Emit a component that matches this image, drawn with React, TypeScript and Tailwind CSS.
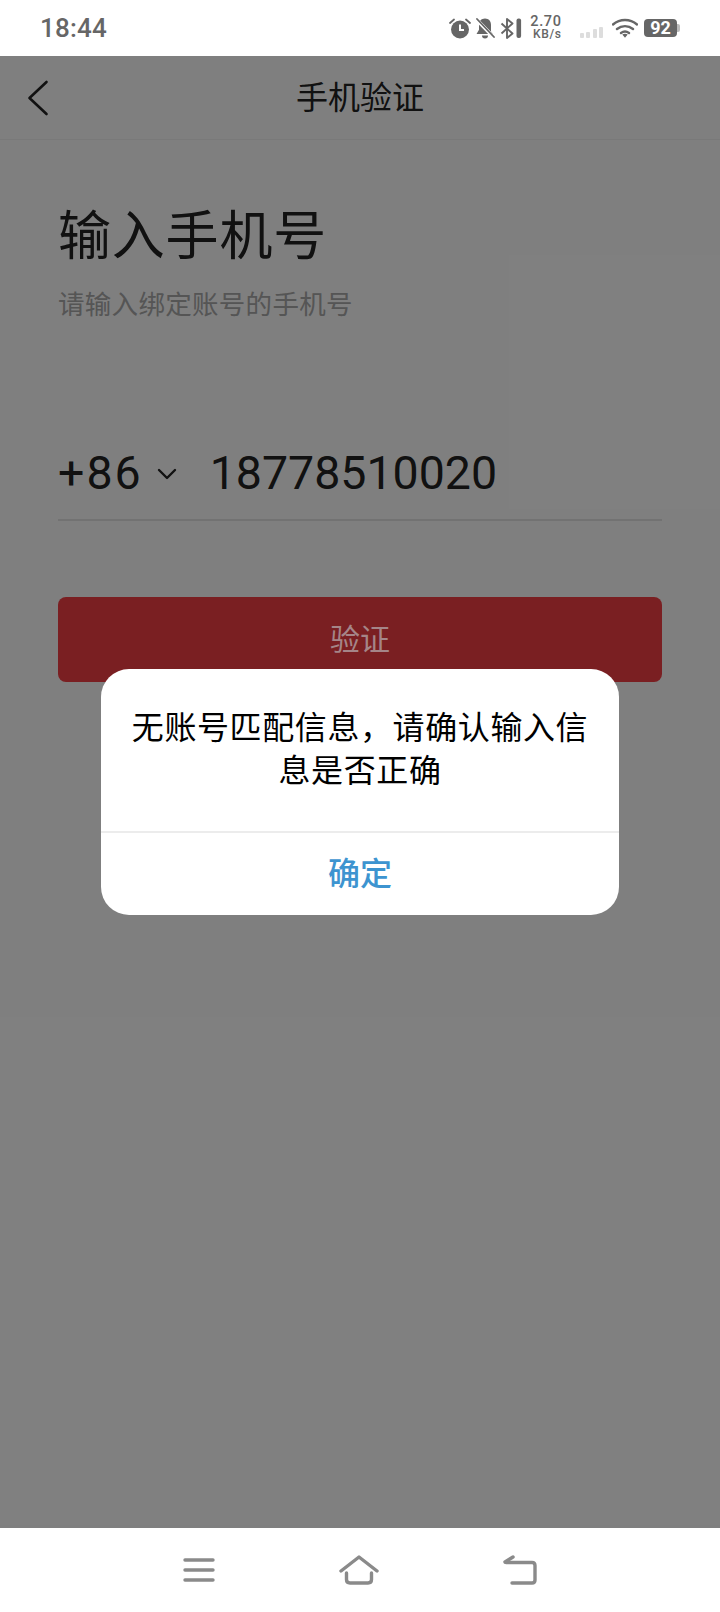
import React from 'react';

const cjk = "font-['Roboto','Noto_Sans_CJK_SC',sans-serif]";

const StatusIcons: React.FC = () => (
  <div className="flex items-center text-[#666]">
    {/* alarm */}
    <svg width="22" height="21" viewBox="0 0 22 21" className="mr-[4px]">
      <circle cx="11" cy="11.5" r="9" fill="#666" />
      <path d="M11 6.500v5.500h4" fill="none" stroke="#fff" strokeWidth="2" />
      <path d="M1 5l4-3.500M21 5l-4-3.500" stroke="#666" strokeWidth="1.800" strokeLinecap="round" />
    </svg>
    {/* muted bell */}
    <svg width="20" height="21" viewBox="0 0 20 21" className="mr-[5px]">
      <path d="M10 .5c-3.800 0-6 2.800-6 6.200v5L1.500 16h16.500L16 13.500V6.700c0-3.400-2.200-6.200-6-6.200z" fill="#666" />
      <path d="M7 17.500a3 3 0 0 0 6 0z" fill="#666" />
      <path d="M1.500 1.500l17 17.500" stroke="#fff" strokeWidth="3.600" />
      <path d="M2 1l17 18" stroke="#666" strokeWidth="1.800" strokeLinecap="round" />
    </svg>
    {/* bluetooth with battery bar */}
    <svg width="22" height="21" viewBox="0 0 22 21" className="mr-[8px]">
      <path d="M1.500 5.500l11 10-5.500 4.500V1l5.500 4.500-11 10" fill="none" stroke="#666" strokeWidth="1.900" strokeLinejoin="round" />
      <rect x="16.500" y="0.500" width="4.600" height="19.500" rx="2" fill="#666" />
    </svg>
    <div className="flex flex-col items-end w-[32px] mr-[18px] font-['Roboto',sans-serif] font-medium">
      <span className="text-[14.500px] leading-[12px] tracking-[0.6px]">2.70</span>
      <span className="text-[12px] leading-[11px] tracking-[0.6px] mt-[1px]">KB/s</span>
    </div>
    {/* weak signal */}
    <div className="flex items-end gap-[2.500px] h-[12px] mr-[9px] mt-[8px]">
      <div className="w-[4px] h-[5px] rounded-[1px] bg-[#ddd]" />
      <div className="w-[4px] h-[6px] rounded-[1px] bg-[#ddd]" />
      <div className="w-[4px] h-[9px] rounded-[1px] bg-[#ddd]" />
      <div className="w-[4px] h-[11px] rounded-[1px] bg-[#ddd]" />
    </div>
    {/* wifi */}
    <svg width="26" height="20" viewBox="0 0 26 20" className="mr-[6px]">
      <path d="M1 6.500C8 .5 18 .5 25 6.500M5 11c4.800-3.800 11.200-3.800 16 0M9 15c2.400-1.700 5.600-1.700 8 0" fill="none" stroke="#666" strokeWidth="2.400" strokeLinecap="round" />
      <path d="M10.300 16.500L13 19.800l2.700-3.300c-1.600-.9-3.800-.9-5.400 0z" fill="#666" />
    </svg>
    {/* battery */}
    <div className="flex items-center">
      <div className="flex items-center justify-center w-[33px] h-[18px] rounded-[4px] bg-[#666] text-white text-[18px] font-bold leading-none font-['Roboto',sans-serif]">
        92
      </div>
      <div className="w-[3px] h-[8px] rounded-r-[2px] bg-[#bbb]" />
    </div>
  </div>
);

const App: React.FC = () => {
  return (
    <div className={`flex flex-col w-[720px] h-[1612px] bg-white overflow-hidden ${cjk}`}>
      {/* Status bar */}
      <div className="flex items-center justify-between h-[56px] shrink-0 pl-[40px] pr-[40px]">
        <span className="text-[26px] font-medium text-[#666] tracking-[0.2px]">18:44</span>
        <StatusIcons />
      </div>

      <div className="relative flex-1 flex flex-col">
        {/* Header */}
        <div className="relative flex items-center justify-center h-[84px] border-b border-[#f2f2f2] shrink-0">
          <svg width="22" height="36" viewBox="0 0 22 36" className="absolute left-[27px] top-[24px]">
            <path d="M19.500 2L2.500 18l17 16" fill="none" stroke="#222" strokeWidth="2.600" strokeLinecap="round" strokeLinejoin="round" />
          </svg>
          <span className="text-[32px] text-[#222]">手机验证</span>
        </div>

        {/* Form */}
        <div className="flex flex-col px-[58px] pt-[59px]">
          <h1 className="text-[53px] leading-[76px] font-normal text-[#222] tracking-[0.800px]">输入手机号</h1>
          <p className="mt-[11px] text-[26.500px] leading-[38px] text-[#aaa] tracking-[0.300px]">请输入绑定账号的手机号</p>

          <div className="flex items-center h-[72px] mt-[114px] text-[46.500px] text-[#222]">
            <span className="tracking-[2px]">+86</span>
            <svg width="20" height="12" viewBox="0 0 20 12" className="ml-[14px] mr-[33px]">
              <path d="M2 2l8 8 8-8" fill="none" stroke="#222" strokeWidth="2.400" strokeLinecap="round" strokeLinejoin="round" />
            </svg>
            <span>18778510020</span>
          </div>
          <div className="mt-[9px] h-[2px] bg-[#e4e4e4]" />

          <div className="flex items-center justify-center h-[85px] mt-[76px] rounded-[8px] bg-[#f43e44]">
            <span className="relative z-10 text-[30px] text-[#a58588]">验证</span>
          </div>
        </div>

        {/* Dialog overlay */}
        <div className="absolute inset-0 flex items-center justify-center bg-black/50">
          <div className="w-[518px] rounded-[28px] bg-white overflow-hidden">
            <div className="flex items-center justify-center h-[162px] px-[28px] text-center text-[32px] leading-[43px] text-black tracking-[0.600px]">
              无账号匹配信息，请确认输入信息是否正确
            </div>
            <div className="flex items-center justify-center h-[84px] border-t-2 border-[#ececec] text-[32px] font-medium text-[#3d94d0]">
              确定
            </div>
          </div>
        </div>
      </div>

      {/* Navigation bar */}
      <div className="flex items-center justify-center h-[84px] shrink-0 pb-[1px]">
        <div className="flex items-center gap-[124px]">
          <svg width="32" height="26" viewBox="0 0 32 26">
            <path d="M2 3h28M2 13h28M2 23h28" stroke="#8a8a8a" strokeWidth="3.400" strokeLinecap="round" />
          </svg>
          <svg width="40" height="30" viewBox="0 0 40 30">
            <path d="M2 16L20 2l18 14" fill="none" stroke="#8a8a8a" strokeWidth="3.400" strokeLinecap="round" strokeLinejoin="round" />
            <path d="M7.500 18v6.500q0 3.500 3.500 3.500h18q3.500 0 3.500-3.500V18" fill="none" stroke="#8a8a8a" strokeWidth="3.400" strokeLinecap="round" />
          </svg>
          <svg width="34" height="30" viewBox="0 0 34 30">
            <path d="M3 7.500h26q3 0 3 3V25q0 3-3 3H9" fill="none" stroke="#8a8a8a" strokeWidth="3.400" strokeLinecap="round" />
            <path d="M2 7l8-5" fill="none" stroke="#8a8a8a" strokeWidth="3.400" strokeLinecap="round" />
          </svg>
        </div>
      </div>
    </div>
  );
};

export default App;
